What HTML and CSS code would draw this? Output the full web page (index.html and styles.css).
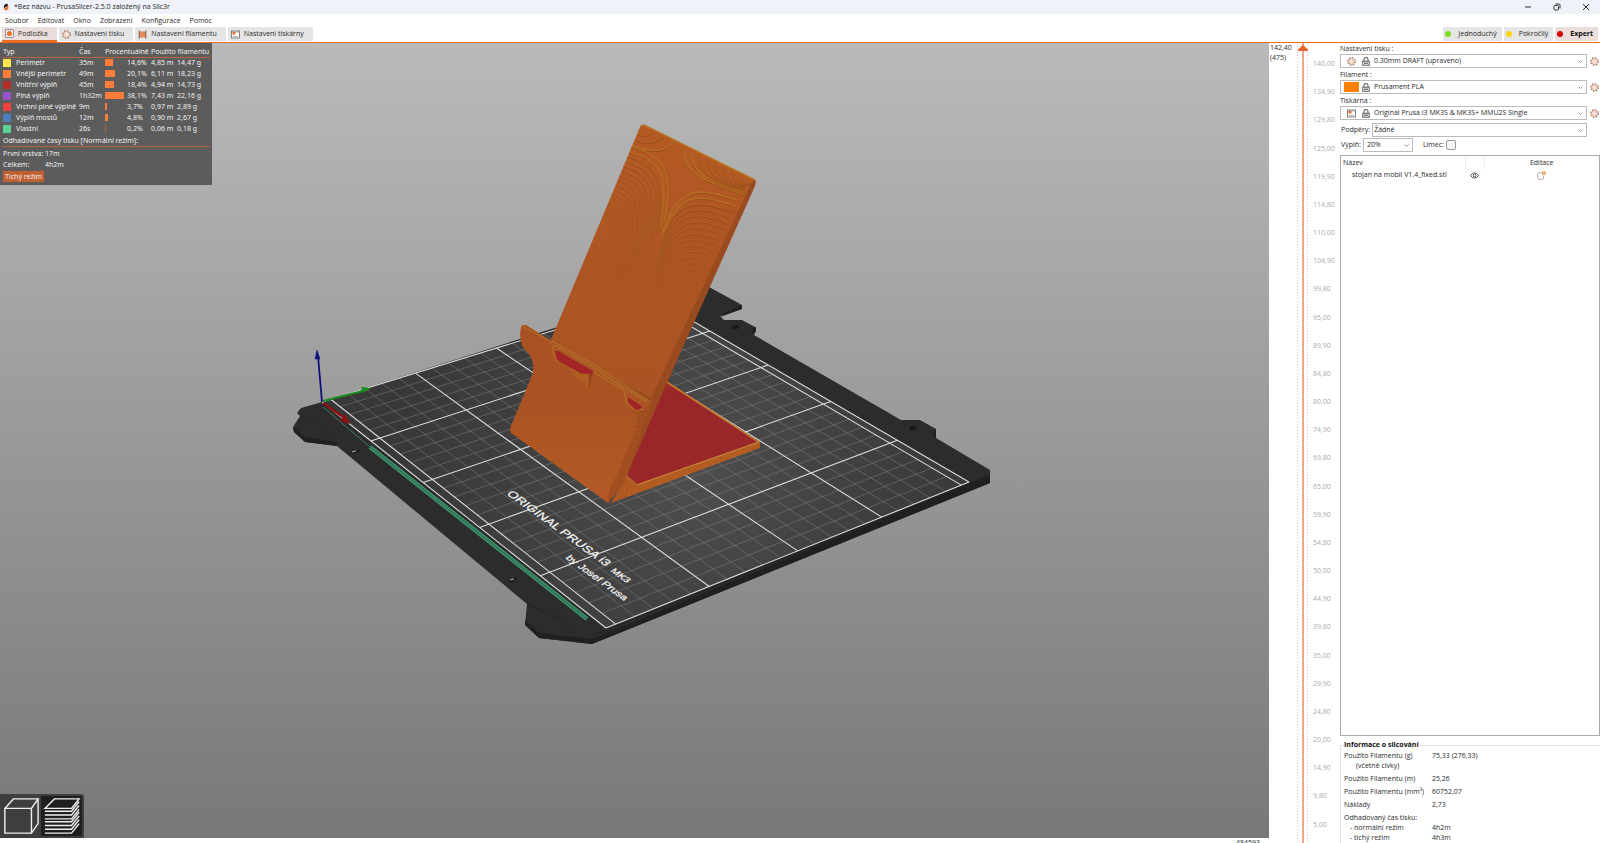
FILE: index.html
```html
<!DOCTYPE html>
<html lang="cs">
<head>
<meta charset="utf-8">
<title>*Bez názvu - PrusaSlicer-2.5.0 založený na Slic3r</title>
<link rel="stylesheet" href="styles.css">
</head>
<body>
<svg class="defs" aria-hidden="true">
  <symbol id="gear" viewBox="0 0 18 18"><circle cx="9" cy="9" r="7.500" fill="none" stroke="#77706c" stroke-width="2.500" stroke-dasharray="2.9 3"/><circle cx="9" cy="9" r="6" fill="#fff" stroke="#e0916c" stroke-width="2"/><circle cx="9" cy="9" r="3.400" fill="#f4f1ef" stroke="#d8a890" stroke-width="1"/></symbol>
  <symbol id="lock" viewBox="0 0 16 18"><path d="M4 9V5a4 4 0 0 1 8 0v4" fill="none" stroke="#666" stroke-width="2.200"/><rect x="1.500" y="8.500" width="13" height="8" fill="#fff" stroke="#666" stroke-width="2.200"/><path d="M4 12.500h8" stroke="#777" stroke-width="3"/></symbol>
  <symbol id="printer" viewBox="0 0 18 18"><rect x="1" y="2" width="16" height="14" fill="#fff" stroke="#777" stroke-width="1.800"/><path d="M1 4h16M4 13h10" stroke="#888" stroke-width="1.300"/><rect x="3" y="4" width="6" height="5" fill="#e86a2d"/></symbol>
  <symbol id="chevron" viewBox="0 0 10 6"><path d="M1 1l4 4 4-4" fill="none" stroke="#777" stroke-width="1.500"/></symbol>
</svg>

<header class="titlebar">
  <svg class="logo" viewBox="0 0 18 24"><path d="M3 9Q5 1 13 2l3 6-9 5-5 4Z" fill="#222"/><path d="M5 16l11-7q2 9-4 12-5 3-8-1Z" fill="#ed6b21"/></svg>
  <span class="title">*Bez názvu - PrusaSlicer-2.5.0 založený na Slic3r</span>
  <button class="win" aria-label="Minimalizovat"><svg viewBox="0 0 8 8"><path d="M1 4h6"/></svg></button>
  <button class="win" aria-label="Obnovit"><svg viewBox="0 0 8 8"><rect x="1" y="2.500" width="4.500" height="4.500" rx="1"/><path d="M2.500 1h3.500q1 0 1 1v3.500"/></svg></button>
  <button class="win" aria-label="Zavřít"><svg viewBox="0 0 8 8"><path d="M1 1l6 6M7 1l-6 6"/></svg></button>
</header>

<nav class="menu">
  <button>Soubor</button><button>Editovat</button><button>Okno</button><button>Zobrazení</button><button>Konfigurace</button><button>Pomoc</button>
</nav>

<div class="tabs">
  <button class="tab active"><svg viewBox="0 0 18 18"><rect x="1" y="1" width="16" height="16" rx="1" fill="#eee" stroke="#777" stroke-width="1.500"/><circle cx="9" cy="9" r="5" fill="#ed6b21"/></svg>Podložka</button>
  <button class="tab"><svg><use href="#gear"/></svg>Nastavení tisku</button>
  <button class="tab"><svg viewBox="0 0 18 18"><rect x="3" y="3" width="12" height="12" fill="#e58a55"/><path d="M2.500 1v16M15.500 1v16" stroke="#8b6d5d" stroke-width="2.500"/></svg>Nastavení filamentu</button>
  <button class="tab"><svg><use href="#printer"/></svg>Nastavení tiskárny</button>
  <span class="spacer"></span>
  <button class="mode"><i class="dot green"></i>Jednoduchý</button>
  <button class="mode"><i class="dot yellow"></i>Pokročilý</button>
  <button class="mode on"><i class="dot red"></i>Expert</button>
</div>

<main class="main">
  <section class="stage">
    <div class="canvas">
      <svg class="scene" viewBox="0 43 1269 795" role="img" aria-label="Náhled modelu na tiskové podložce">
        <defs>
          <radialGradient id="sheen" gradientUnits="userSpaceOnUse" cx="690" cy="470" r="300"><stop offset="0" stop-color="#4e4e4e"/><stop offset=".6" stop-color="#3f3f3f"/><stop offset="1" stop-color="#383838"/></radialGradient>
          <linearGradient id="plate" x1="0" y1="0" x2="0" y2="1"><stop offset="0" stop-color="#b55a24"/><stop offset=".45" stop-color="#ad5624"/><stop offset="1" stop-color="#aa5423"/></linearGradient>
          <linearGradient id="front" x1="0" y1="0" x2="0" y2="1"><stop offset="0" stop-color="#a85122"/><stop offset=".4" stop-color="#a95323"/><stop offset="1" stop-color="#b35a25"/></linearGradient>
          <clipPath id="plate-shape"><path d="M640 127Q641 124 645 125L754 180Q750 184 748 190L651 398 550 342Z"/></clipPath>
        </defs>
        <path fill="#2c2c2c" d="M322 402L301 408 297 413 300 416 293 427 294 432 305 442 337 446 527 604 525 625 539 638 592 644 990 483V470L936 438V429L920 420H901L754 335 756 330 755 327 742 320H724L720 316 742 309V305L709 287 655 296Z"/>
        <path fill="#202020" d="M293 427l12 10 32 5v4l-32-4-11-10ZM525 620l14 13 53 6 398-164v8L592 644l-53-6-14-13ZM724 313l18-8v4l-22 8ZM936 429v9l-4-3ZM756 327v4l-3 4-2-6Z"/>
        <path d="M300 416l17 6 20 20M527 604l34 15 14 16M592 636l398-161" fill="none" stroke="#1f1f1f" stroke-width=".7"/>
        <path d="M732 326l6-1 1 3-6 2ZM909 427l6-1 2 3-6 2ZM351 452l8-2 1 1-7 3ZM509 580l8-3-1 3-5 3Z" fill="#181818"/>
        <path d="M352 452l4-1M510 580l4-1" stroke="#bbb"/>
        <path fill="url(#sheen)" d="M322 402L606 628 969 482 655 299Z"/>
        <path id="minor" fill="none" stroke="#929292" stroke-opacity=".5" stroke-width=".8"/>
        <path id="major" fill="none" stroke="#dcdcdc" stroke-width="1.100"/>
        <path d="M323 407l47 40" stroke="#3e8065"/>
        <path d="M370 447L587 619" stroke="#2f7557" stroke-width="4"/>
        <path d="M371 446L588 618M369 448L586 620" stroke="#409068" stroke-width="1.300"/>
        <path d="M323 401l40-10" stroke="#178a1c" stroke-width="2"/><path d="M361 387l10 1-8 5Z" fill="#178a1c"/>
        <path d="M323 403l20 14" stroke="#8d1111" stroke-width="2.500"/><path d="M345 414l5 10-10-3Z" fill="#8d1111"/>
        <path d="M322 402l-4-46" stroke="#10107c" stroke-width="1.800"/><path d="M317 350l3 9h-5Z" fill="#10107c" stroke="#10107c" stroke-width=".5"/>
        <g class="bed-text">
          <text transform="matrix(.81 .59 -.72 .46 506 494)" font-size="13">ORIGINAL PRUSA i3</text>
          <text transform="matrix(.81 .59 -.72 .46 610 571)" font-size="10">MK3</text>
          <text transform="matrix(.81 .59 -.72 .46 565 558)" font-size="11">by Josef Prusa</text>
        </g>
        <path fill="#b35c22" d="M667 381L760 442V448L611 503 627 474Z"/>
        <path fill="#992629" d="M666 383L757 442 637 484 627 475Z"/>
        <path d="M667 382L759 442 637 485 626 476" fill="none" stroke="#c98a3e" stroke-width=".9"/>
        <path fill="#9a4a1f" d="M642 125L756 181 755 186 663 392 627 475 608 503 612 430 552 338Z"/>
        <path fill="url(#plate)" d="M640 127Q641 124 645 125L754 180Q750 184 748 190L651 398 550 342Z"/>
        <g clip-path="url(#plate-shape)"><g id="contours" transform="translate(480 110) scale(.3333)" fill="none"></g></g>
        <path d="M641 126l3-1 111 55" fill="none" stroke="#ba751f" stroke-width="1.500"/>
        <path fill="#a95524" d="M551 338L652 403 642 414 553 358Z"/>
        <path fill="#a12427" d="M555 351l3 0 35 20v7l-14-3-22-13ZM628 397l15 10-6 4-9-8Z"/>
        <path fill="url(#front)" d="M521 327Q522 324 526 325L550 340Q554 344 553 350 553 357 560 363L578 373 592 376 593 372 623 389Q627 392 626 401L636 411 647 407 653 399 640 430 627 474 608 503 511 433Q509 430 511 426L533 373Q535 358 525 350 518 342 521 327Z"/>
        <path fill="#a34e21" d="M626 402l10 9 11-4 6-8-26 75-3 9-16 20q-1-5 1-11l28-63q4-15-11-28Z"/>
        <path d="M554 345l39 22 33 22 21 13M552 341l41 23 35 23 21 14" fill="none" stroke="#b88328" stroke-width=".8"/>
        <path d="M522 326l28 15q4 6 3 11 1 7 9 12l17 9M593 372l31 18 2 12 10 9 8-2" fill="none" stroke="#b9741f" stroke-width="1"/>
        <path d="M577 373l12 1-1 14q-5-8-18-15Z" fill="#b05e23"/><path d="M589 374v14l2-9 1-5Z" fill="#914619"/>
        <path d="M632 412h16M633 417h13M635 422h10M634 427h9M633 432h8M631 438h8M629 444h8M626 450h8M624 456h8M621 462h8" stroke="#934820" stroke-width=".5"/>
        <path d="M611 503l16-23M617 501l10-18M624 499l6-15M627 476l10 10" stroke="#965021" stroke-width=".7"/>
      </svg>

      <aside class="legend">
        <table>
          <colgroup><col class="c-sw"><col class="c-type"><col class="c-time"><col class="c-bar"><col class="c-pct"><col class="c-m"><col></colgroup>
          <thead><tr><th colspan="2">Typ</th><th>Čas</th><th colspan="2">Procentuálně</th><th colspan="2">Použito filamentu</th></tr></thead>
          <tbody>
            <tr><td><i class="sw" style="background:#ffe64d"></i></td><td>Perimetr</td><td>35m</td><td><i class="bar" style="width:8px"></i></td><td>14,6%</td><td>4,85 m</td><td>14,47 g</td></tr>
            <tr><td><i class="sw" style="background:#ff7d38"></i></td><td>Vnější perimetr</td><td>49m</td><td><i class="bar" style="width:10px"></i></td><td>20,1%</td><td>6,11 m</td><td>18,23 g</td></tr>
            <tr><td><i class="sw" style="background:#b03029"></i></td><td>Vnitřní výplň</td><td>45m</td><td><i class="bar" style="width:9px"></i></td><td>18,4%</td><td>4,94 m</td><td>14,73 g</td></tr>
            <tr><td><i class="sw" style="background:#9654cc"></i></td><td>Plná výplň</td><td>1h32m</td><td><i class="bar" style="width:19px"></i></td><td>38,1%</td><td>7,43 m</td><td>22,16 g</td></tr>
            <tr><td><i class="sw" style="background:#f04040"></i></td><td>Vrchní plné výplně</td><td>9m</td><td><i class="bar" style="width:2px"></i></td><td>3,7%</td><td>0,97 m</td><td>2,89 g</td></tr>
            <tr><td><i class="sw" style="background:#4d80ba"></i></td><td>Výplň mostů</td><td>12m</td><td><i class="bar" style="width:3px"></i></td><td>4,8%</td><td>0,90 m</td><td>2,67 g</td></tr>
            <tr><td><i class="sw" style="background:#5ed194"></i></td><td>Vlastní</td><td>26s</td><td><i class="bar thin" style="width:1px"></i></td><td>0,2%</td><td>0,06 m</td><td>0,18 g</td></tr>
          </tbody>
        </table>
        <h2>Odhadované časy tisku [Normální režim]:</h2>
        <dl><dt>První vrstva:</dt><dd>17m</dd><dt>Celkem:</dt><dd>4h2m</dd></dl>
        <button class="quiet">Tichý režim</button>
      </aside>

      <div class="views">
        <button aria-label="3D editor"><svg viewBox="0 0 40 40"><path d="M3 12h28v26H3ZM3 12L12 2h26l-7 10M38 2v26l-7 10"/></svg></button>
        <button class="on" aria-label="Náhled"><svg viewBox="0 0 40 40"><path d="M2 12L12 2h26l-8 10ZM2 15h28l8-10M2 19h28l8-10M2 23h28l8-10M2 26h28l8-10M2 30h28l8-10M2 34h28l8-10M2 38h28l8-10"/></svg></button>
      </div>
    </div>
    <div class="moves">484593</div>
  </section>

  <section class="layers">
    <div class="current">142,40<br>(475)</div>
    <input class="range" type="range" min="0" max="475" value="475" aria-label="Vrstva">
    <ol class="ticks">
      <li>140,00</li><li>134,90</li><li>129,80</li><li>125,00</li><li>119,90</li><li>114,80</li><li>110,00</li><li>104,90</li><li>99,80</li><li>95,00</li><li>89,90</li><li>84,80</li><li>80,00</li><li>74,90</li><li>69,80</li><li>65,00</li><li>59,90</li><li>54,80</li><li>50,00</li><li>44,90</li><li>39,80</li><li>35,00</li><li>29,90</li><li>24,80</li><li>20,00</li><li>14,90</li><li>9,80</li><li>5,00</li>
    </ol>
  </section>

  <aside class="panel">
    <label for="p1">Nastavení tisku :</label>
    <div class="row"><div class="combo"><svg class="kind"><use href="#gear"/></svg><svg class="lock"><use href="#lock"/></svg><select id="p1"><option>0.30mm DRAFT (upraveno)</option></select><svg class="chev"><use href="#chevron"/></svg></div><button class="cog" aria-label="Upravit nastavení tisku"><svg><use href="#gear"/></svg></button></div>
    <label for="p2">Filament :</label>
    <div class="row"><div class="combo"><i class="color"></i><svg class="lock"><use href="#lock"/></svg><select id="p2"><option>Prusament PLA</option></select><svg class="chev"><use href="#chevron"/></svg></div><button class="cog" aria-label="Upravit filament"><svg><use href="#gear"/></svg></button></div>
    <label for="p3">Tiskárna :</label>
    <div class="row"><div class="combo"><svg class="kind"><use href="#printer"/></svg><svg class="lock"><use href="#lock"/></svg><select id="p3"><option>Original Prusa i3 MK3S &amp; MK3S+ MMU2S Single</option></select><svg class="chev"><use href="#chevron"/></svg></div><button class="cog" aria-label="Upravit tiskárnu"><svg><use href="#gear"/></svg></button></div>
    <div class="row supports"><label for="p4">Podpěry:</label><div class="combo plain"><select id="p4"><option>Žádné</option></select><svg class="chev"><use href="#chevron"/></svg></div></div>
    <div class="row infill"><label for="p5">Výplň:</label><div class="combo pct"><select id="p5"><option>20%</option></select><svg class="chev"><use href="#chevron"/></svg></div><label class="brim" for="p6">Límec:</label><input id="p6" type="checkbox"></div>

    <div class="objects">
      <table>
        <thead><tr><th>Název</th><th class="eye"></th><th class="edit">Editace</th></tr></thead>
        <tbody><tr><td>stojan na mobil V1.4_fixed.stl</td><td class="eye"><svg viewBox="0 0 24 18"><path d="M1 9Q12-5 23 9 12 23 1 9Z" fill="none" stroke="#444" stroke-width="2.500"/><circle cx="12" cy="9" r="3.500" fill="none" stroke="#444" stroke-width="2.500"/></svg></td><td class="edit"><svg viewBox="0 0 26 26"><path d="M13 5H5Q2 5 2 8v13q0 3 3 3h11q3 0 3-3v-7" fill="none" stroke="#a08a80" stroke-width="2"/><circle cx="20" cy="6" r="4" fill="none" stroke="#ed6b21" stroke-width="3" /></svg></td></tr></tbody>
      </table>
    </div>

    <fieldset class="info">
      <legend>Informace o slicování</legend>
      <dl>
        <dt>Použito Filamentu (g)<span>(včetně cívky)</span></dt><dd>75,33 (276,33)</dd>
        <dt>Použito Filamentu (m)</dt><dd>25,26</dd>
        <dt>Použito Filamentu (mm³)</dt><dd>60752,07</dd>
        <dt>Náklady</dt><dd>2,73</dd>
      </dl>
      <dl class="times">
        <dt class="head">Odhadovaný čas tisku:</dt><dd></dd>
        <dt>- normální režim</dt><dd>4h2m</dd>
        <dt>- tichý režim</dt><dd>4h3m</dd>
      </dl>
    </fieldset>
  </aside>
</main>
<script src="scene.js"></script>
</body>
</html>
```
FILE: styles.css
```css
* { box-sizing: border-box; }
body { margin: 0; height: 100vh; display: flex; flex-direction: column; overflow: hidden; background: #fff; color: #2a2a2a; font: 7px/10px "Open Sans", "Noto Sans", sans-serif; }
button, select, input { font: inherit; color: inherit; margin: 0; padding: 0; border: 0; background: none; white-space: nowrap; }
i { display: block; }
.defs { position: absolute; width: 0; height: 0; }

.titlebar { display: flex; align-items: center; flex: none; height: 14px; padding-left: 3px; background: #eff3f9; color: #222; }
.logo { width: 6px; height: 8px; margin-right: 5px; }
.title { flex: 1; }
.win { width: 29px; height: 14px; display: grid; place-items: center; }
.win svg { width: 8px; height: 8px; fill: none; stroke: #333; stroke-width: 1; }

.menu { display: flex; align-items: center; flex: none; gap: 9px; height: 13px; padding-left: 5px; }

.tabs { display: flex; flex: none; gap: 2px; height: 16px; padding: 0 2px; border-bottom: 1px solid #ed6b21; }
.tab { display: flex; align-items: center; gap: 4px; height: 14px; padding: 0 9px 0 3px; background: #e5e5e5; }
.tab svg { width: 9px; height: 9px; }
.tab.active { height: 15px; background: #e9dedb; border-bottom: 2px solid #ed6b21; }
.spacer { flex: 1; }
.mode { display: flex; align-items: center; gap: 7px; height: 14px; padding: 0 5px 0 2px; background: #e5e5e5; }
.mode.on { background: #ecdfdb; color: #111; font-weight: 700; }
.dot { width: 6px; height: 6px; border-radius: 50%; }
.green { background: #76e01f; }
.yellow { background: #fcd20a; }
.red { background: #d80000; }

.main { flex: 1; min-height: 0; display: flex; }
.stage { flex: 1; min-width: 0; display: flex; flex-direction: column; }
.canvas { position: relative; flex: 1; min-height: 0; background: linear-gradient(#bababa, #787878); }
.scene { display: block; width: 100%; height: 100%; }
.bed-text { font-family: "Liberation Sans", Arial, sans-serif; fill: #f2f2f2; stroke: #f2f2f2; stroke-width: .3; }
.moves { height: 5px; padding-right: 9px; text-align: right; overflow: hidden; }

.legend { position: absolute; left: 0; top: 0; width: 212px; padding: 3px 2px 3px 3px; background: #5c5c5c; color: #f2f2f2; font: 7px/9px "Noto Sans", sans-serif; }
.legend table { width: 100%; border-collapse: collapse; table-layout: fixed; white-space: nowrap; }
.c-sw { width: 13px; }
.c-type { width: 63px; }
.c-time { width: 26px; }
.c-bar { width: 22px; }
.c-pct { width: 24px; }
.c-m { width: 26px; }
.legend th { height: 11px; padding: 0; font-weight: 400; text-align: left; border-bottom: 1px solid #ba623b; }
.legend td { height: 11px; padding: 0; }
.legend tbody { border-top: 1px solid #ba623b; }
.sw { width: 8px; height: 8px; }
.bar { height: 7px; background: #ff7d38; }
.thin { background: #b06a48; }
.legend h2 { margin: 2px 0 1px; padding-bottom: 1px; border-bottom: 1px solid #ba623b; font: inherit; }
.legend dl { display: grid; grid-template-columns: 42px 1fr; margin: 0 0 1px; line-height: 11px; }
.legend dd { margin: 0; }
.quiet { display: block; padding: 1px 2px; background: #c0602f; }

.views { position: absolute; left: 0; bottom: 0; display: flex; height: 44px; padding: 2px 2px 2px 0; background: #3e3e3e; border-radius: 0 3px 0 0; }
.views button { width: 41px; display: grid; place-items: center; }
.views .on { background: #1f1f1f; }
.views svg { width: 38px; height: 38px; fill: none; stroke: #eee; stroke-width: 1.5; }

.layers { display: flex; width: 71px; }
.current { width: 27px; padding: 0 0 0 1px; line-height: 10px; }
.range { appearance: none; writing-mode: vertical-lr; direction: rtl; width: 14px; height: 100%; background: linear-gradient(90deg, transparent 6px, #f3a587 6px 8px, transparent 8px), repeating-linear-gradient(#ccc 0 1px, transparent 1px 3px) 1px 0 / 1px 100% no-repeat, repeating-linear-gradient(#ccc 0 1px, transparent 1px 3px) 11px 0 / 1px 100% no-repeat; }
.range::-webkit-slider-thumb { appearance: none; width: 10px; height: 8px; background: #e8642c; clip-path: polygon(50% 25%, 100% 80%, 100% 100%, 0 100%, 0 80%); }
.ticks { flex: 1; display: flex; flex-direction: column; justify-content: space-between; list-style: none; margin: 0; padding: 16px 0 13px 3px; color: #aaa; }

.panel { width: 260px; display: flex; flex-direction: column; }
.panel > label { line-height: 11px; }
.row { display: flex; align-items: center; gap: 2px; height: 14px; margin-bottom: 1px; }
.combo { position: relative; flex: 1; display: flex; align-items: center; gap: 3px; height: 14px; padding-left: 3px; border: 1px solid #bbb; background: #fff; }
.combo select { flex: 1; min-width: 0; height: 12px; appearance: none; outline: 0; }
.chev { position: absolute; right: 3px; width: 5px; height: 3px; pointer-events: none; }
.kind { width: 9px; height: 9px; margin: 0 3px; }
.color { width: 15px; height: 10px; background: #ff8000; }
.lock { width: 8px; height: 9px; }
.lock + select { margin-left: 1px; }
.cog { width: 11px; height: 11px; display: grid; place-items: center; }
.cog svg { width: 9px; height: 9px; }
.supports { margin: 2px 13px 1px 1px; }
.supports .combo { padding-left: 1px; }
.infill { margin: 0 0 3px 1px; }
.infill .pct { flex: none; width: 50px; }
.brim { margin-left: 8px; }
.infill input { appearance: none; width: 10px; height: 10px; border: 1px solid #999; border-radius: 2px; background: #f6f6f6; }
.objects { flex: 1; border: 1px solid #aaa; }
.objects table { width: 100%; border-collapse: collapse; }
.objects th { height: 13px; padding: 0 0 0 2px; font-weight: 400; text-align: left; }
.objects td { height: 12px; padding: 0 0 0 11px; }
.objects .eye { width: 19px; padding: 0; border: 0 solid #eee; text-align: center; }
.objects th.eye { border-width: 0 1px; }
.objects .edit { width: 115px; padding: 0; text-align: center; }
.objects svg { display: block; width: 9px; height: 9px; margin: auto; }
.info { margin: 4px 0 0; padding: 1px 3px 0; border: 1px solid #e2e2e2; border-width: 1px 0 0 1px; }
.info legend { padding: 0 1px 0 0; color: #111; font-weight: 700; }
.info dl { display: grid; grid-template-columns: 88px 1fr; row-gap: 3px; margin: 0; }
.info dt { white-space: nowrap; }
.info dd { margin: 0; }
.info dt span { display: block; padding-left: 12px; }
.info .times { row-gap: 0; margin-top: 3px; }
.times dt { padding-left: 6px; }
.times .head { padding: 0; }
```
FILE: scene.js
```js
// Projects bed millimetres (x 0..250, y -5..205) onto the view.
const corners = [[322, 402], [606, 628], [969, 482], [655, 299]];

function projector([p0, p1, p2, p3]) {
  const dx1 = p1[0] - p2[0], dx2 = p3[0] - p2[0], dx3 = p0[0] - p1[0] + p2[0] - p3[0];
  const dy1 = p1[1] - p2[1], dy2 = p3[1] - p2[1], dy3 = p0[1] - p1[1] + p2[1] - p3[1];
  const det = dx1 * dy2 - dx2 * dy1;
  const g = (dx3 * dy2 - dx2 * dy3) / det;
  const h = (dx1 * dy3 - dx3 * dy1) / det;
  return (x, y) => {
    const u = x / 250, v = (y + 5) / 210, w = g * u + h * v + 1;
    return [
      ((p1[0] - p0[0] + g * p1[0]) * u + (p3[0] - p0[0] + h * p3[0]) * v + p0[0]) / w,
      ((p1[1] - p0[1] + g * p1[1]) * u + (p3[1] - p0[1] + h * p3[1]) * v + p0[1]) / w
    ].map(n => n.toFixed(1)).join(' ');
  };
}

const at = projector(corners);
const line = (a, b, c, d) => `M${at(a, b)}L${at(c, d)}`;
let minor = '', major = line(0, -5, 0, 205) + line(0, -5, 250, -5) + line(0, 205, 250, 205) + line(250, -5, 250, 205);
for (let x = 10; x < 250; x += 10) {
  if (x % 50) minor += line(x, 0, x, 200); else major += line(x, -5, x, 205);
}
for (let y = 0; y <= 200; y += 10) {
  if (y % 50) minor += line(0, y, 250, y); else major += line(0, y, 250, y);
}
document.getElementById('minor').setAttribute('d', minor);
document.getElementById('major').setAttribute('d', major);

// Layer contours on the back plate.
const contours = [];
for (let i = 0; i < 15; i++) {
  const y = 112 + i * 14, x = 448 - i * 6;
  const ex = 552 - i * 11, ey = 340 + i * 16;
  contours.push([`M${x} ${y}C${x + 75} ${y + 25} ${ex + 40 - i * 3} ${ey - 190} ${ex} ${ey}`, i]);
}
for (let i = 0; i < 18; i++) {
  const y = 275 + i * 17, x = 790 - (y - 240) * 0.44;
  contours.push([`M${x} ${y}C${x - 120 + i * 4} ${y - 40} ${600 - i * 2} ${225 + i * 21} ${548 - i * 2} ${370 + i * 14}`, i]);
}
for (let i = 0; i < 8; i++) {
  const x = 612 + i * 24, y = 118 + i * 12;
  contours.push([`M${x} ${y}C${x - 4} ${y + 70 - i * 8} ${x + 50} ${y + 95 - i * 8} ${792 + i} ${256 - i * 6}`, i]);
}
contours.push(['M455 110Q550 145 582 95', 0], ['M466 92Q520 112 550 84', 2], ['M474 74Q500 90 522 68', 3]);
document.getElementById('contours').innerHTML = contours.map(([d, i]) => {
  const fade = Math.max(0.08, 0.8 - i * 0.045);
  return `<path d="${d}" stroke="#8a431a" stroke-width="3" opacity="${fade}"/><path d="${d}" stroke="#b87322" stroke-width="${i < 2 ? 5 : 2}" opacity="${fade}" transform="translate(0 -3)"/>`;
}).join('');
```
